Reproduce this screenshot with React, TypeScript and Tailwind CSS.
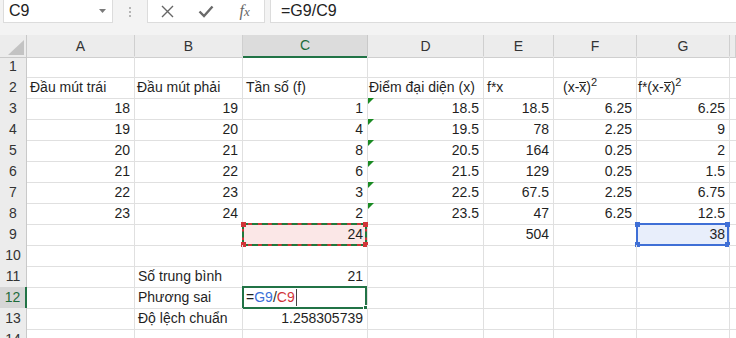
import React from "react";

type C = { v?: React.ReactNode; r?: boolean; pl?: string };

const Xbar = () => (
  <span>
    (x-<span className="inline-block border-t border-[#1f1f1f] leading-[9px]">x</span>)
    <span className="relative -top-[6px] text-[11px]">2</span>
  </span>
);

const n = (v: string | number): C => ({ v: String(v), r: true });
const t = (v: React.ReactNode, pl?: string): C => ({ v, pl });
const e: C = {};

const rows: C[][] = [
  [e, e, e, e, e, e, e],
  [
    t("Đầu mút trái"),
    t("Đầu mút phải", "pl-[2px]"),
    t("Tần số (f)"),
    t("Điểm đại diện (x)", "pl-[1px]"),
    t("f*x"),
    t(<Xbar />, "pl-[9px]"),
    t(<span>f*<Xbar /></span>, "pl-[1px]"),
  ],
  [n(18), n(19), n(1), n(18.5), n(18.5), n(6.25), n(6.25)],
  [n(19), n(20), n(4), n(19.5), n(78), n(2.25), n(9)],
  [n(20), n(21), n(8), n(20.5), n(164), n(0.25), n(2)],
  [n(21), n(22), n(6), n(21.5), n(129), n(0.25), n(1.5)],
  [n(22), n(23), n(3), n(22.5), n(67.5), n(2.25), n(6.75)],
  [n(23), n(24), n(2), n(23.5), n(47), n(6.25), n(12.5)],
  [e, e, n(24), e, n(504), e, n(38)],
  [e, e, e, e, e, e, e],
  [e, t("Số trung bình"), n(21), e, e, e, e],
  [e, t("Phương sai"), e, e, e, e, e],
  [e, t("Độ lệch chuẩn"), n("1.258305739"), e, e, e, e],
  [e, e, e, e, e, e, e],
];

const GRID = "grid grid-cols-[27px_108px_108px_125px_116px_70px_83px_93px_1fr] h-[21px]";

function Corner({ color, pos }: { color: string; pos: string }) {
  return <div className={`absolute w-[5px] h-[5px] ${color} ${pos}`} />;
}

export default function App() {
  return (
    <div className="w-[736px] h-[338px] overflow-hidden bg-white font-['Liberation_Sans',Arial,sans-serif] text-[#1f1f1f]">
      {/* formula bar */}
      <div className="h-[35px] bg-[#f3f3f3] flex items-start">
        <div className="ml-[3px] w-[110px] h-[23px] bg-white border border-t-0 border-[#dcdcdc] flex items-center pl-[5px] pr-[6px]">
          <span className="text-[16px] text-[#222] flex-1">C9</span>
          <svg width="7" height="4" viewBox="0 0 7 4">
            <polygon points="0,0 7,0 3.5,4" fill="#7a7a7a" />
          </svg>
        </div>
        <div className="w-[34px] h-[23px] flex flex-col items-center justify-center gap-[2px]">
          <div className="w-[2px] h-[2px] bg-[#b5b5b5]" />
          <div className="w-[2px] h-[2px] bg-[#b5b5b5]" />
          <div className="w-[2px] h-[2px] bg-[#b5b5b5]" />
        </div>
        <div className="w-[118px] h-[23px] bg-white border border-t-0 border-[#dcdcdc] flex">
          <div className="w-[39px] flex items-center justify-center">
            <svg width="13" height="13" viewBox="0 0 13 13">
              <path d="M1 1 L12 12 M12 1 L1 12" stroke="#666" strokeWidth="1.4" />
            </svg>
          </div>
          <div className="w-[39px] flex items-center justify-center">
            <svg width="16" height="13" viewBox="0 0 16 13">
              <path d="M1.5 6.5 L6 11 L14.5 1.5" stroke="#6a6a6a" strokeWidth="2.4" fill="none" />
            </svg>
          </div>
          <div className="w-[39px] flex items-center justify-center">
            <span className="font-['Liberation_Serif',serif] italic text-[16px] text-[#666] leading-none">
              f<span className="text-[13px]">x</span>
            </span>
          </div>
        </div>
        <div className="ml-[5px] flex-1 h-[23px] bg-white border-l border-b border-[#dcdcdc] flex items-center pl-[10px]">
          <span className="text-[16px] text-[#222]">=G9/C9</span>
        </div>
      </div>

      {/* column headers */}
      <div className={GRID}>
        <div className="relative bg-[#ececec] border-r border-b border-[#c9c9c9]">
          <svg className="absolute right-[2px] bottom-[2px]" width="16" height="15" viewBox="0 0 16 15">
            <polygon points="16,0 16,15 0,15" fill="#c3c3c3" />
          </svg>
        </div>
        {["A", "B", "C", "D", "E", "F", "G", ""].map((l) =>
          l === "C" ? (
            <div
              key={l}
              className="bg-[#dcdcdc] border-r border-[#c9c9c9] border-b-2 border-b-[#217346] flex items-center justify-center text-[14px] text-[#1d6b3a]"
            >
              {l}
            </div>
          ) : (
            <div
              key={l || "h"}
              className="bg-[#ececec] border-r border-b border-[#cfcfcf] flex items-center justify-center text-[14px] text-[#333]"
            >
              {l}
            </div>
          )
        )}
      </div>

      {rows.map((row, ri) => {
        const rn = ri + 1;
        return (
          <div key={rn} className={GRID}>
            {rn === 12 ? (
              <div className="bg-[#d6d6d6] border-b border-[#c9c9c9] border-r-2 border-r-[#217346] flex items-center justify-center text-[14px] text-[#1d6b3a]">
                {rn}
              </div>
            ) : (
              <div className="bg-[#ececec] border-r border-b border-[#c9c9c9] flex items-center justify-center text-[14px] text-[#333]">
                {rn}
              </div>
            )}
            {row.map((c, ci) => {
              const isD = ci === 3 && rn >= 3 && rn <= 8;
              const isC9 = ci === 2 && rn === 9;
              const isG9 = ci === 6 && rn === 9;
              const isC12 = ci === 2 && rn === 12;
              return (
                <div
                  key={ci}
                  className={`relative border-r border-b border-[#e0e0e0] flex items-center whitespace-nowrap text-[14px] ${
                    c.r ? "justify-end pr-[4px]" : c.pl ?? "pl-[3px]"
                  }`}
                >
                  {isC9 && (
                    <div className="absolute left-[-1px] top-[-1px] right-[0px] bottom-[-1px] bg-[#d13438]">
                      <div className="w-full h-full border-2 border-dashed border-[#1f7a3d] bg-[#fbe7e7] bg-clip-padding" />
                      <Corner color="bg-[#d13438]" pos="-left-[1px] -top-[1px]" />
                      <Corner color="bg-[#d13438]" pos="-right-[1px] -top-[1px]" />
                      <Corner color="bg-[#d13438]" pos="-left-[1px] -bottom-[1px]" />
                      <Corner color="bg-[#d13438]" pos="-right-[1px] -bottom-[1px]" />
                    </div>
                  )}
                  {isG9 && (
                    <div className="absolute left-[-1px] top-[-1px] right-[0px] bottom-[-1px] border-2 border-[#3f6fd6] bg-[#e8eefb]">
                      <Corner color="bg-[#3f6fd6]" pos="-left-[3px] -top-[3px]" />
                      <Corner color="bg-[#3f6fd6]" pos="-right-[3px] -top-[3px]" />
                      <Corner color="bg-[#3f6fd6]" pos="-left-[3px] -bottom-[3px]" />
                      <Corner color="bg-[#3f6fd6]" pos="-right-[3px] -bottom-[3px]" />
                    </div>
                  )}
                  {isC12 && (
                    <div className="absolute left-[-1px] top-[-1px] right-[0px] bottom-[-1px] border-2 border-[#217346] flex items-center pl-[2px]">
                      <span className="text-[#1f1f1f]">=</span>
                      <span className="text-[#3a6fd8]">G9</span>
                      <span className="text-[#1f1f1f]">/</span>
                      <span className="text-[#d13438]">C9</span>
                      <div className="ml-[1px] w-[1px] h-[17px] bg-[#444]" />
                      <div className="absolute -right-[3px] -bottom-[3px] w-[5px] h-[5px] bg-[#217346] border border-white" />
                    </div>
                  )}
                  {isD && (
                    <div className="absolute left-0 top-0 w-0 h-0 border-t-[6px] border-r-[6px] border-t-[#1a8a23] border-r-transparent" />
                  )}
                  {c.v !== undefined && <span className="relative">{c.v}</span>}
                </div>
              );
            })}
            <div className="border-b border-[#e0e0e0]" />
          </div>
        );
      })}
    </div>
  );
}
